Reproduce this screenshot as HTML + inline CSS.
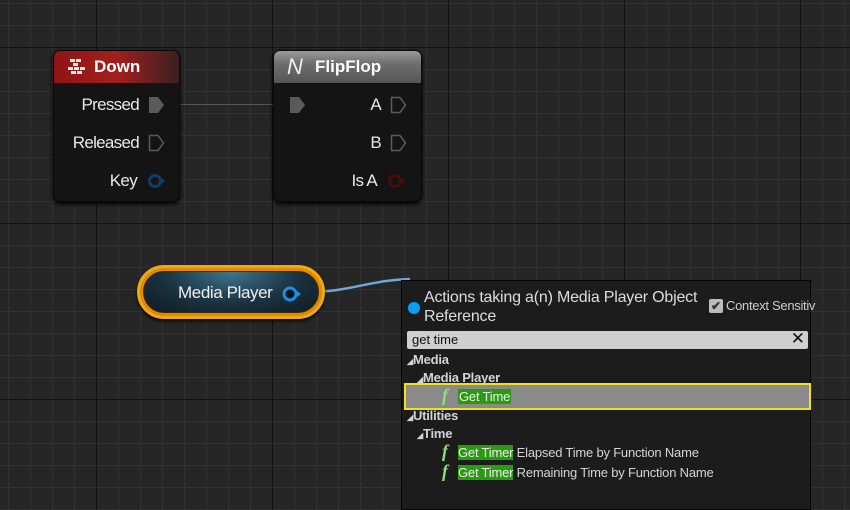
<!DOCTYPE html>
<html><head><meta charset="utf-8"><style>
*{margin:0;padding:0;box-sizing:border-box}
body{width:850px;height:504px;overflow:hidden;position:relative;font-family:"Liberation Sans",sans-serif;
background-color:#262626;
background-image:
linear-gradient(90deg,#121212 1px,transparent 1px),
linear-gradient(0deg,#121212 1px,transparent 1px),
linear-gradient(90deg,#323232 1px,transparent 1px),
linear-gradient(0deg,#323232 1px,transparent 1px);
background-size:176px 176px,176px 176px,22px 22px,22px 22px;
background-position:96px 0,0 48px,8px 0,0 4px;}
.node{position:absolute;background:#141414;border-radius:7px;box-shadow:0 2px 4px #000;border:1px solid #0a0a0a}
.hdr{height:32px;border-radius:6px 6px 0 0;color:#fff;font-weight:bold;font-size:17px;line-height:32px;padding-left:40px;position:relative}
.pin{position:absolute;color:#e8e8e8;font-size:17px;text-align:right;letter-spacing:-0.7px}
.lbl{position:absolute;color:#d4d4d4;font-size:13px;letter-spacing:-0.2px}
.f{position:absolute;color:#8fe07a;font-style:italic;font-weight:bold;font-family:'Liberation Serif',serif;font-size:18px}
</style></head><body>
<div style="position:absolute;left:170px;top:104px;width:110px;height:1px;background:#555"></div>

<div class="node" style="left:53px;top:50px;width:127px;height:152px">
 <div class="hdr" style="background:linear-gradient(90deg,#8e1414,#a31f1f 50%,#3a2020)">
  <svg style="position:absolute;left:13px;top:7px" width="20" height="18" viewBox="0 0 20 18"><g fill="#eee"><rect x="3" y="1" width="5" height="3"/><rect x="9" y="1" width="5" height="3"/><rect x="6" y="5" width="5" height="3"/><rect x="1" y="9" width="5" height="3"/><rect x="7" y="9" width="5" height="3"/><rect x="13" y="9" width="5" height="3"/><rect x="4" y="13" width="5" height="3"/><rect x="10" y="13" width="5" height="3"/></g></svg>Down</div>
 <div class="pin" style="right:40px;top:44px">Pressed</div>
 <svg style="position:absolute;left:94px;top:45px" width="18" height="18"><path d="M1 1h9l6 8-6 8H1z" fill="#5a5a5a"/></svg>
 <div class="pin" style="right:40px;top:82px">Released</div>
 <svg style="position:absolute;left:94px;top:83px" width="18" height="18"><path d="M1.5 1.5h8.5l5.5 7.5-5.5 7.5H1.5z" fill="none" stroke="#5a5a5a" stroke-width="1.5"/></svg>
 <div class="pin" style="right:42px;top:120px">Key</div>
 <svg style="position:absolute;left:93px;top:122px" width="20" height="16"><circle cx="8" cy="8" r="5.5" fill="none" stroke="#123c6a" stroke-width="3"/><path d="M15 5l3 3-3 3z" fill="#123c6a"/></svg>
</div>

<div class="node" style="left:273px;top:50px;width:149px;height:152px">
 <div class="hdr" style="background:linear-gradient(180deg,#9a9a9a,#6e6e6e 40%,#555);padding-left:41px">
  <span style="position:absolute;left:13px;top:0;font-style:italic;font-size:22px;font-weight:normal;color:#eee">N</span>FlipFlop</div>
 <svg style="position:absolute;left:15px;top:45px" width="18" height="18"><path d="M1 1h9l6 8-6 8H1z" fill="#5a5a5a"/></svg>
 <div class="pin" style="right:40px;top:44px">A</div>
 <svg style="position:absolute;left:116px;top:45px" width="18" height="18"><path d="M1.5 1.5h8.5l5.5 7.5-5.5 7.5H1.5z" fill="none" stroke="#5a5a5a" stroke-width="1.5"/></svg>
 <div class="pin" style="right:40px;top:82px">B</div>
 <svg style="position:absolute;left:116px;top:83px" width="18" height="18"><path d="M1.5 1.5h8.5l5.5 7.5-5.5 7.5H1.5z" fill="none" stroke="#5a5a5a" stroke-width="1.5"/></svg>
 <div class="pin" style="right:44px;top:120px">Is A</div>
 <svg style="position:absolute;left:113px;top:122px" width="20" height="16"><circle cx="8" cy="8" r="5.5" fill="none" stroke="#4a0c0c" stroke-width="3"/><path d="M15 5l3 3-3 3z" fill="#4a0c0c"/></svg>
</div>

<svg style="position:absolute;left:300px;top:275px" width="120" height="30"><path d="M8 17 C50 17 70 5 110 4" fill="none" stroke="#6fa6dc" stroke-width="2.5"/></svg>

<div style="position:absolute;left:137px;top:265px;width:188px;height:54px;border-radius:27px;background:#e08a00;border:3px solid #f0aa10;box-shadow:0 2px 3px #000">
 <div style="position:absolute;left:3px;top:3px;right:3px;bottom:3px;border-radius:22px;background:radial-gradient(ellipse at 50% 0%,#3d7590,#1b3240 55%,#101a22);border:1px solid #3a2a10"></div>
 <div style="position:absolute;left:38px;top:15px;color:#f0f0f0;font-size:17px;letter-spacing:-0.4px">Media Player</div>
 <svg style="position:absolute;left:142px;top:17px" width="22" height="18"><circle cx="8" cy="9" r="6" fill="#0c1420" stroke="#1e8fe0" stroke-width="3"/><path d="M15 6l4 3-4 3z" fill="#1e8fe0"/></svg>
</div>

<div style="position:absolute;left:401px;top:280px;width:410px;height:230px;background:#1c1c1c;border:1px solid #050505">
 <div style="position:absolute;left:6px;top:21px;width:12px;height:12px;border-radius:50%;background:#08a0f0"></div>
 <div style="position:absolute;left:22px;top:7px;color:#ddd;font-size:16px;line-height:19px;width:290px;letter-spacing:-0.2px">Actions taking a(n) Media Player Object Reference</div>
 <div style="position:absolute;left:307px;top:18px;width:14px;height:14px;background:#bbb;border-radius:2px;color:#333;font-size:12px;line-height:14px;text-align:center;font-weight:bold">✔</div>
 <div style="position:absolute;left:324px;top:17px;color:#ccc;font-size:13px;white-space:nowrap;letter-spacing:-0.3px">Context Sensitiv</div>
 <div style="position:absolute;left:5px;top:50px;width:401px;height:18px;background:#cfcfcf;border-radius:2px;color:#111;font-size:13px;line-height:18px;padding-left:5px">get time<span style="position:absolute;right:3px;top:-1px;font-size:17px">✕</span></div>
 <div class="lbl" style="left:5px;top:71px;font-weight:bold"><span style="font-size:8px">◢</span>Media</div>
 <div class="lbl" style="left:15px;top:89px;font-weight:bold"><span style="font-size:8px">◢</span>Media Player</div>
 <div style="position:absolute;left:2px;top:102px;width:407px;height:27px;border:2px solid #f0e020;background:#8a8a8a"></div>
 <div class="f" style="left:40px;top:104px">f</div>
 <div class="lbl" style="left:56px;top:108px;background:#2a9a10;color:#eee;padding:0 1px">Get Time</div>
 <div class="lbl" style="left:5px;top:127px;font-weight:bold"><span style="font-size:8px">◢</span>Utilities</div>
 <div class="lbl" style="left:15px;top:145px;font-weight:bold"><span style="font-size:8px">◢</span>Time</div>
 <div class="f" style="left:40px;top:160px">f</div>
 <div class="lbl" style="left:56px;top:164px"><span style="background:#2a9a10;color:#eee">Get Timer</span> Elapsed Time by Function Name</div>
 <div class="f" style="left:40px;top:180px">f</div>
 <div class="lbl" style="left:56px;top:184px"><span style="background:#2a9a10;color:#eee">Get Timer</span> Remaining Time by Function Name</div>
</div>
</body></html>
